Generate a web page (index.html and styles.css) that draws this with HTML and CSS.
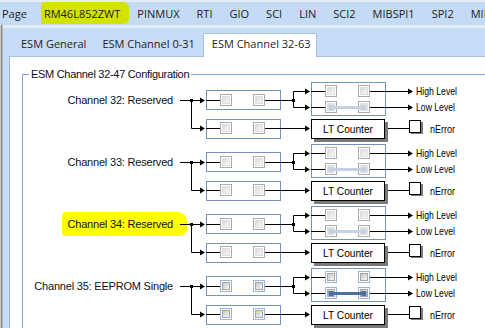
FILE: index.html
```html
<!DOCTYPE html>
<html lang="en">
<head>
    <meta charset="UTF-8">
    <title>ESM Channel 32-63</title>
    <link rel="stylesheet" href="styles.css">
</head>
<body>
    <nav class="menubar">
        <span>Page</span>
        <span class="marked">RM46L852ZWT</span>
        <span>PINMUX</span>
        <span>RTI</span>
        <span>GIO</span>
        <span>SCI</span>
        <span>LIN</span>
        <span>SCI2</span>
        <span>MIBSPI1</span>
        <span>SPI2</span>
        <span>MIBSPI3</span>
    </nav>
    <div class="workspace">
        <div class="gutter"></div>
        <div class="tabview">
            <div class="tabstrip">
                <span class="tab">ESM General</span>
                <span class="tab">ESM Channel 0-31</span>
                <span class="tab active">ESM Channel 32-63</span>
            </div>
            <div class="tabpage">
                <fieldset class="group">
                    <legend>ESM Channel 32-47 Configuration</legend>
                    <div id="channels">
                        <!-- channel rows are built below -->
                    </div>
                </fieldset>
            </div>
        </div>
    </div>

    <script>
        const channels = [
            { name: 'Channel 32: Reserved' },
            { name: 'Channel 33: Reserved' },
            { name: 'Channel 34: Reserved', marked: true },
            { name: 'Channel 35: EEPROM Single', enabled: true }
        ];

        function arrow(x, y) {
            return `<path class="head" d="M${x - 5} ${y - 3}L${x} ${y}L${x - 5} ${y + 3}Z"/>`;
        }

        function checkbox(x, y, grad) {
            return `<rect class="cb-outer" x="${x + 0.5}" y="${y + 0.5}" width="11" height="11"/>` +
                `<rect class="cb-inner" x="${x + 2.5}" y="${y + 2.5}" width="7" height="7" fill="url(#${grad})"/>`;
        }

        // narrow label, squeezed to the width it has in the tool
        function label(text, x, y, width, anchor) {
            const a = anchor ? ` text-anchor="${anchor}"` : '';
            return `<text x="${x}" y="${y}"${a} textLength="${width}" lengthAdjust="spacingAndGlyphs">${text}</text>`;
        }

        function diagram(ch, i) {
            const grad = 'cbfill' + i;
            let s = `<svg class="diagram${ch.enabled ? ' on' : ''}" width="300" height="62" viewBox="0 0 300 62">`;
            s += `<defs><linearGradient id="${grad}" x1="0" y1="0" x2="1" y2="1">` +
                `<stop offset="0" stop-color="${ch.enabled ? '#c4c4c4' : '#d8d8d8'}"/>` +
                `<stop offset="1" stop-color="#fbfbfb"/></linearGradient></defs>`;

            // blocks
            s += '<rect class="box" x="30.5" y="10.5" width="74" height="19"/>';
            s += '<rect class="box" x="30.5" y="39.5" width="74" height="19"/>';
            s += '<rect class="box" x="135.5" y="2.5" width="74" height="33"/>';

            // wiring
            s += '<path class="wire" d="M4 20.5H25M15.5 20.5V48.5H25M30 20.5H44M89 20.5H117.5' +
                'M117.5 11.5V27.5M117.5 11.5H130M117.5 27.5H130M135 11.5H149M135 27.5H149' +
                'M194 11.5H233M194 27.5H233M30 48.5H44M89 48.5H130M211 48.5H233"/>';
            s += '<rect class="dot" x="14" y="19" width="3" height="3"/>';
            s += '<rect class="dot" x="116" y="19" width="3" height="3"/>';
            s += arrow(29, 20.5) + arrow(29, 48.5) + arrow(134, 11.5) + arrow(134, 27.5) +
                arrow(134, 48.5) + arrow(237, 11.5) + arrow(237, 27.5);

            // check boxes
            s += checkbox(44, 14, grad) + checkbox(77, 14, grad);
            s += checkbox(44, 42, grad) + checkbox(77, 42, grad);
            s += checkbox(149, 5, grad) + checkbox(182, 5, grad);
            s += checkbox(149, 21, grad) + checkbox(182, 21, grad);

            // low level link
            s += '<path class="slider" d="M155 27.5H188"/>';
            s += '<rect class="knob" x="152.5" y="25" width="5" height="5"/>';
            s += '<rect class="knob" x="185.5" y="25" width="5" height="5"/>';

            // LT counter + nError
            s += '<rect class="shadow" x="138" y="42" width="74" height="20"/>';
            s += '<rect class="plain" x="135.5" y="39.5" width="73" height="19"/>';
            s += label('LT Counter', 172, 52.5, 50, 'middle');
            s += '<rect class="shadow" x="235" y="42" width="12" height="12"/>';
            s += '<rect class="plain" x="233.5" y="40.5" width="11" height="12"/>';
            s += label('nError', 254, 52.5, 25);

            s += label('High Level', 240, 15, 41);
            s += label('Low Level', 240, 31, 39);
            return s + '</svg>';
        }

        const list = document.getElementById('channels');
        channels.forEach((ch, i) => {
            const row = document.createElement('div');
            row.className = 'channel';
            const name = ch.marked ? `<span class="yellow">${ch.name}</span>` : ch.name;
            row.innerHTML = `<div class="ch-label">${name}</div>` + diagram(ch, i);
            list.appendChild(row);
        });
    </script>
</body>
</html>
```

FILE: styles.css
```css
html, body {
    margin: 0;
    height: 100%;
}
body {
    width: 485px;
    height: 328px;
    overflow: hidden;
    display: flex;
    flex-direction: column;
    background-color: #c6dcf6;
    font-family: 'Open Sans', sans-serif;
}
.menubar {
    display: flex;
    align-items: center;
    gap: 17px;
    height: 25px;
    box-sizing: border-box;
    padding-left: 2px;
    border-top: 2px solid #e6edf6;
    background-color: #c4dbf6;
    font-size: 11px;
    color: #1c1c1c;
    white-space: nowrap;
}
.menubar .marked {
    background-color: #d4e200;
    padding: 4px 9px 3px 3px;
    margin: -4px -9px -3px -3px;
    border-radius: 3px 6px 5px 2px;
}
.workspace {
    flex: 1;
    display: flex;
    min-height: 0;
}
.gutter {
    width: 3px;
    flex: none;
    background: linear-gradient(to right, #c9c9c9 0 1px, #8a8a8a 1px 2px, #b4b4b4 2px 3px);
}
.tabview {
    flex: 1;
    min-width: 0;
    display: flex;
    flex-direction: column;
    border-top: 3px solid #e3ecf8;
    padding-left: 6px;
    background-color: #c7dcf6;
}
.tabstrip {
    display: flex;
    align-items: flex-end;
    height: 28px;
    padding-left: 4px;
    font-size: 11px;
    color: #1e1e1e;
    white-space: nowrap;
}
.tab {
    height: 22px;
    line-height: 20px;
    padding: 0 8px;
}
.tab.active {
    position: relative;
    z-index: 1;
    height: 23px;
    margin-bottom: -1px;
    padding: 0 6px 0 8px;
    background-color: #ffffff;
    border: 1px solid #a9c0de;
    border-bottom: none;
    border-radius: 2px 2px 0 0;
}
.tabpage {
    flex: 1;
    min-height: 0;
    overflow: hidden;
    background-color: #ffffff;
    border-top: 1px solid #a6bfdf;
    border-left: 1px solid #a3b4ca;
    padding-left: 12px;
}
.group {
    margin: 11px -10px 0 0;
    padding: 0 0 10px 0;
    min-width: 0;
    border: 1px solid #7ea5d8;
}
.group legend {
    margin-left: 6px;
    padding: 0 2px;
    font: 11px/12px 'Liberation Sans', sans-serif;
    letter-spacing: -0.3px;
    color: #0b0b26;
}
.channel {
    display: flex;
    height: 62px;
}
.ch-label {
    flex: none;
    width: 153px;
    box-sizing: border-box;
    padding: 13px 3px 0 0;
    text-align: right;
    font: 11px/14px 'Liberation Sans', sans-serif;
    letter-spacing: -0.2px;
    color: #101018;
    white-space: nowrap;
}
.ch-label .yellow {
    background-color: #ffff00;
    padding: 6px 14px 6px 6px;
    margin: 0 -14px 0 -6px;
    border-radius: 4px 9px 7px 3px;
}
.diagram {
    flex: none;
    display: block;
    overflow: visible;
}
.diagram .box {
    fill: none;
    stroke: #7393ba;
}
.diagram .wire {
    fill: none;
    stroke: #000000;
}
.diagram .head,
.diagram .dot {
    fill: #000000;
}
.diagram .cb-outer {
    fill: #ffffff;
    stroke: #ababab;
}
.diagram .cb-inner {
    stroke: #e0e0e0;
}
.diagram.on .cb-outer {
    stroke: #9ab6da;
}
.diagram.on .cb-inner {
    stroke: #a6a6a6;
}
.diagram .slider {
    stroke: #c6d2e2;
    stroke-width: 3;
}
.diagram .knob {
    fill: #c6d2e2;
}
.diagram.on .slider {
    stroke: #4d6f9f;
}
.diagram.on .knob {
    fill: #4d6f9f;
}
.diagram .plain {
    fill: #ffffff;
    stroke: #000000;
}
.diagram .shadow {
    fill: #7a7a7a;
}
.diagram text {
    font: 11.5px 'Liberation Sans', sans-serif;
    fill: #000000;
}
```
